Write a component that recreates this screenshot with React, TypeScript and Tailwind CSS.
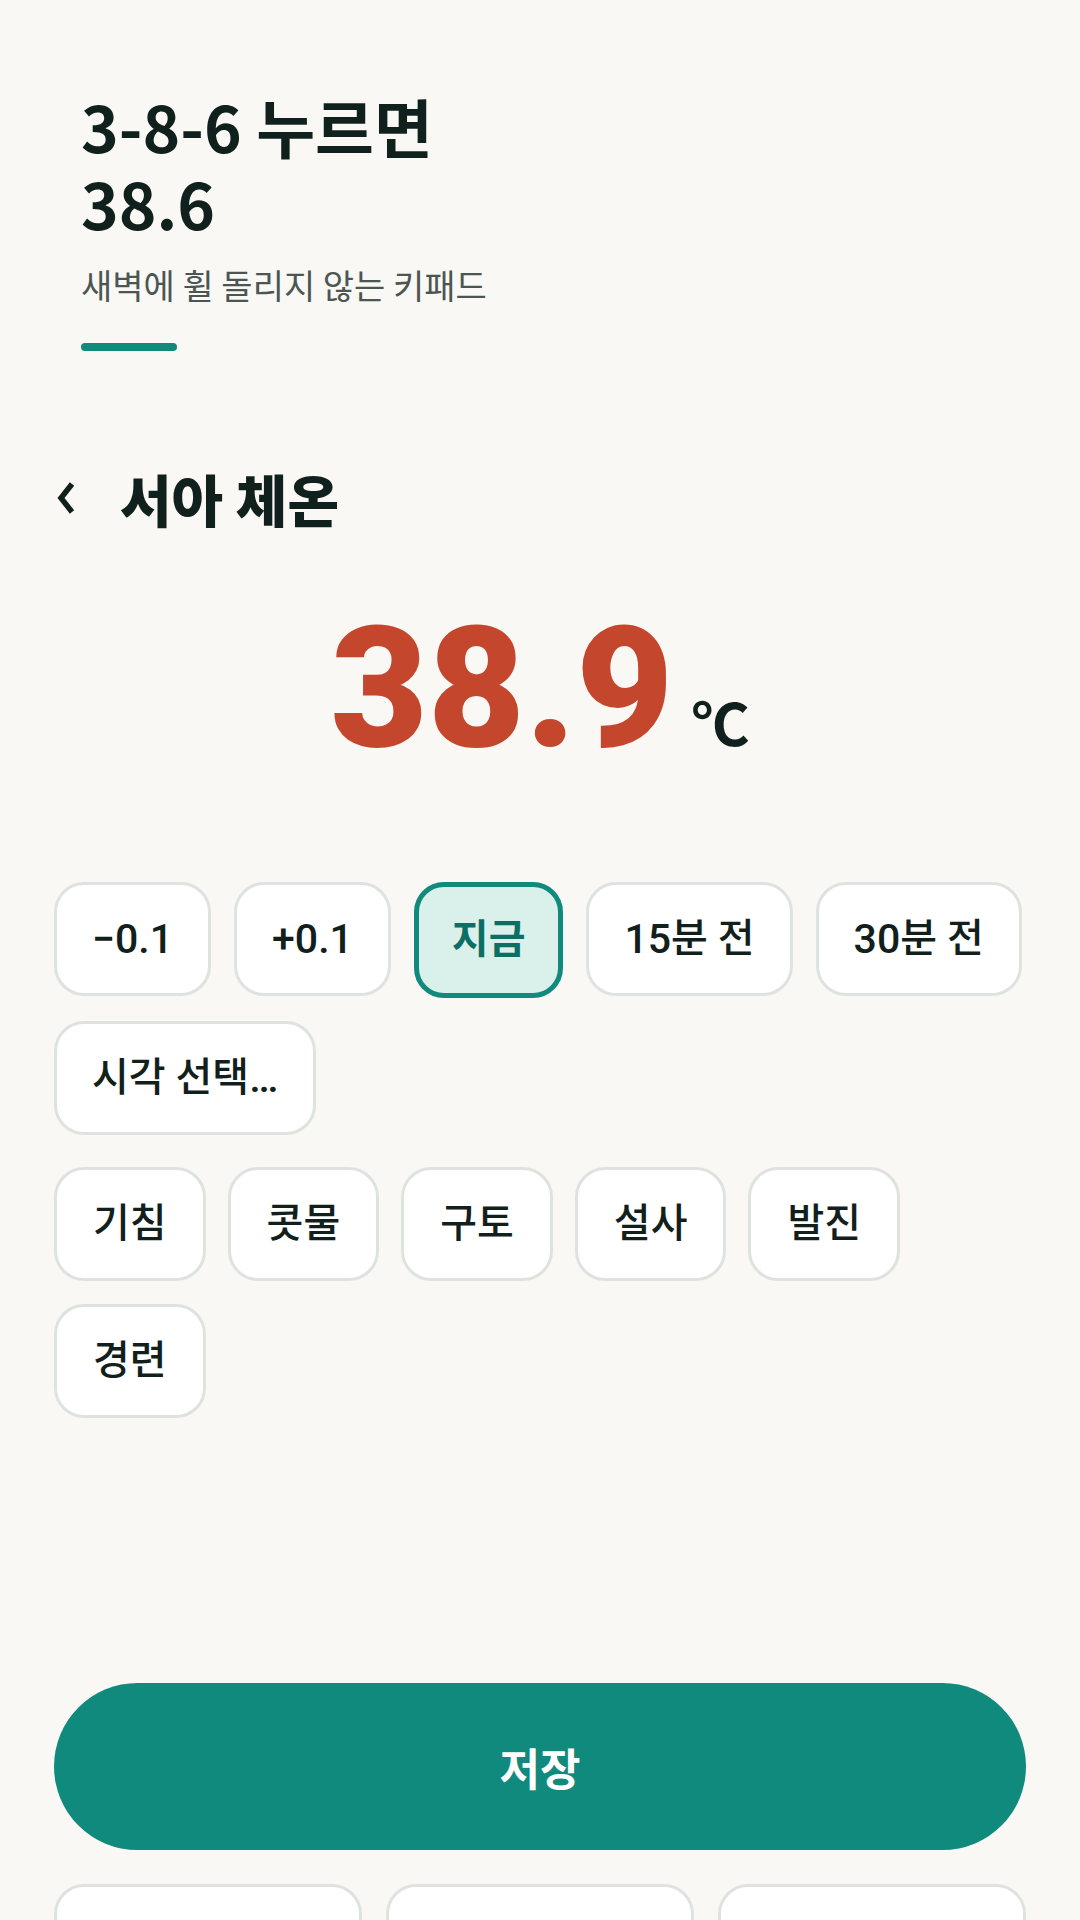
import { useState } from 'react'

const sans = "font-['Roboto','Noto_Sans_CJK_KR',sans-serif]"
const cjk = "font-['Noto_Sans_CJK_KR','Noto_Sans',sans-serif]"

const timeChips = ['−0.1', '+0.1', '지금', '15분 전', '30분 전', '시각 선택…']
const symptoms = ['기침', '콧물', '구토', '설사', '발진', '경련']

// digits render a touch larger than the hangul next to them
function Label({ text }: { text: string }) {
  const parts = text.split(/([0-9.+−…]+)/).filter(Boolean)
  return (
    <>
      {parts.map((p, i) =>
        /^[0-9.+−…]+$/.test(p) ? (
          <span key={i} className="text-[41px]">
            {p}
          </span>
        ) : (
          <span key={i}>{p}</span>
        ),
      )}
    </>
  )
}

function Chip({ label, active, onClick }: { label: string; active?: boolean; onClick?: () => void }) {
  return (
    <button
      type="button"
      onClick={onClick}
      className={
        active
          ? 'h-[116px] px-[33px] rounded-[30px] border-[5px] border-[#0f8a7c] bg-[#d9f0eb] text-[#0d6f63] font-bold text-[40px] leading-none flex items-center'
          : 'h-[114px] px-[35px] rounded-[30px] border-[3px] border-[#dfe3e0] bg-white text-[#12201c] font-medium text-[40px] leading-none flex items-center'
      }
    >
      <Label text={label} />
    </button>
  )
}

export default function App() {
  const [time, setTime] = useState('지금')
  const [picked, setPicked] = useState<string[]>([])

  const toggle = (s: string) =>
    setPicked((p) => (p.includes(s) ? p.filter((x) => x !== s) : [...p, s]))

  return (
    <div className={`h-[1920px] overflow-hidden bg-[#f9f8f4] ${sans}`}>
      {/* header */}
      <div className={`pl-[81px] pt-[87px] ${cjk}`}>
        <h1 className="text-[64px] leading-[77px] font-bold text-[#10201c]">
          3-8-6 누르면
          <br />
          38.6
        </h1>
        <p className="mt-[21px] text-[34px] leading-[46px] text-[#4b5653]">새벽에 휠 돌리지 않는 키패드</p>
        <div className="mt-[35px] h-[8px] w-[96px] rounded-full bg-[#0f8a7c]" />
      </div>

      <div className="px-[54px]">
        {/* title row */}
        <div className={`mt-[114px] flex h-[65px] items-center ${cjk}`}>
          <svg width="20" height="32" viewBox="0 0 20 32" className="ml-[2px]">
            <path d="M16 2 L5 16 L16 30" fill="none" stroke="#10201c" strokeWidth="5.5" />
          </svg>
          <h2 className="ml-[44px] text-[56px] leading-[65px] font-black text-[#10201c]">서아 체온</h2>
        </div>

        {/* reading */}
        <div className="mt-[75px] flex items-baseline justify-center">
          <span className="text-[168px] leading-none font-black text-[#c4472d]">38.9</span>
          <span className="ml-[18px] text-[58px] leading-none font-bold text-[#10201c]">℃</span>
        </div>

        {/* time chips */}
        <div className="mt-[109px] flex flex-wrap gap-x-[23px] gap-y-[23px]">
          {timeChips.map((c) => (
            <Chip key={c} label={c} active={time === c} onClick={() => setTime(c)} />
          ))}
        </div>

        {/* symptoms */}
        <div className="mt-[32px] flex flex-wrap gap-x-[22px] gap-y-[23px]">
          {symptoms.map((s) => (
            <div key={s} className="[&>button]:px-[36px]">
              <Chip label={s} active={picked.includes(s)} onClick={() => toggle(s)} />
            </div>
          ))}
        </div>

        <button
          type="button"
          className={`mt-[265px] h-[167px] w-full rounded-full bg-[#0f8a7c] text-white text-[44px] font-bold ${cjk}`}
        >
          저장
        </button>

        <div className="mt-[34px] grid grid-cols-3 gap-[24px]">
          <div className="h-[114px] rounded-[30px] border-[3px] border-[#dfe3e0] bg-white" />
          <div className="h-[114px] rounded-[30px] border-[3px] border-[#dfe3e0] bg-white" />
          <div className="h-[114px] rounded-[30px] border-[3px] border-[#dfe3e0] bg-white" />
        </div>
      </div>
    </div>
  )
}
